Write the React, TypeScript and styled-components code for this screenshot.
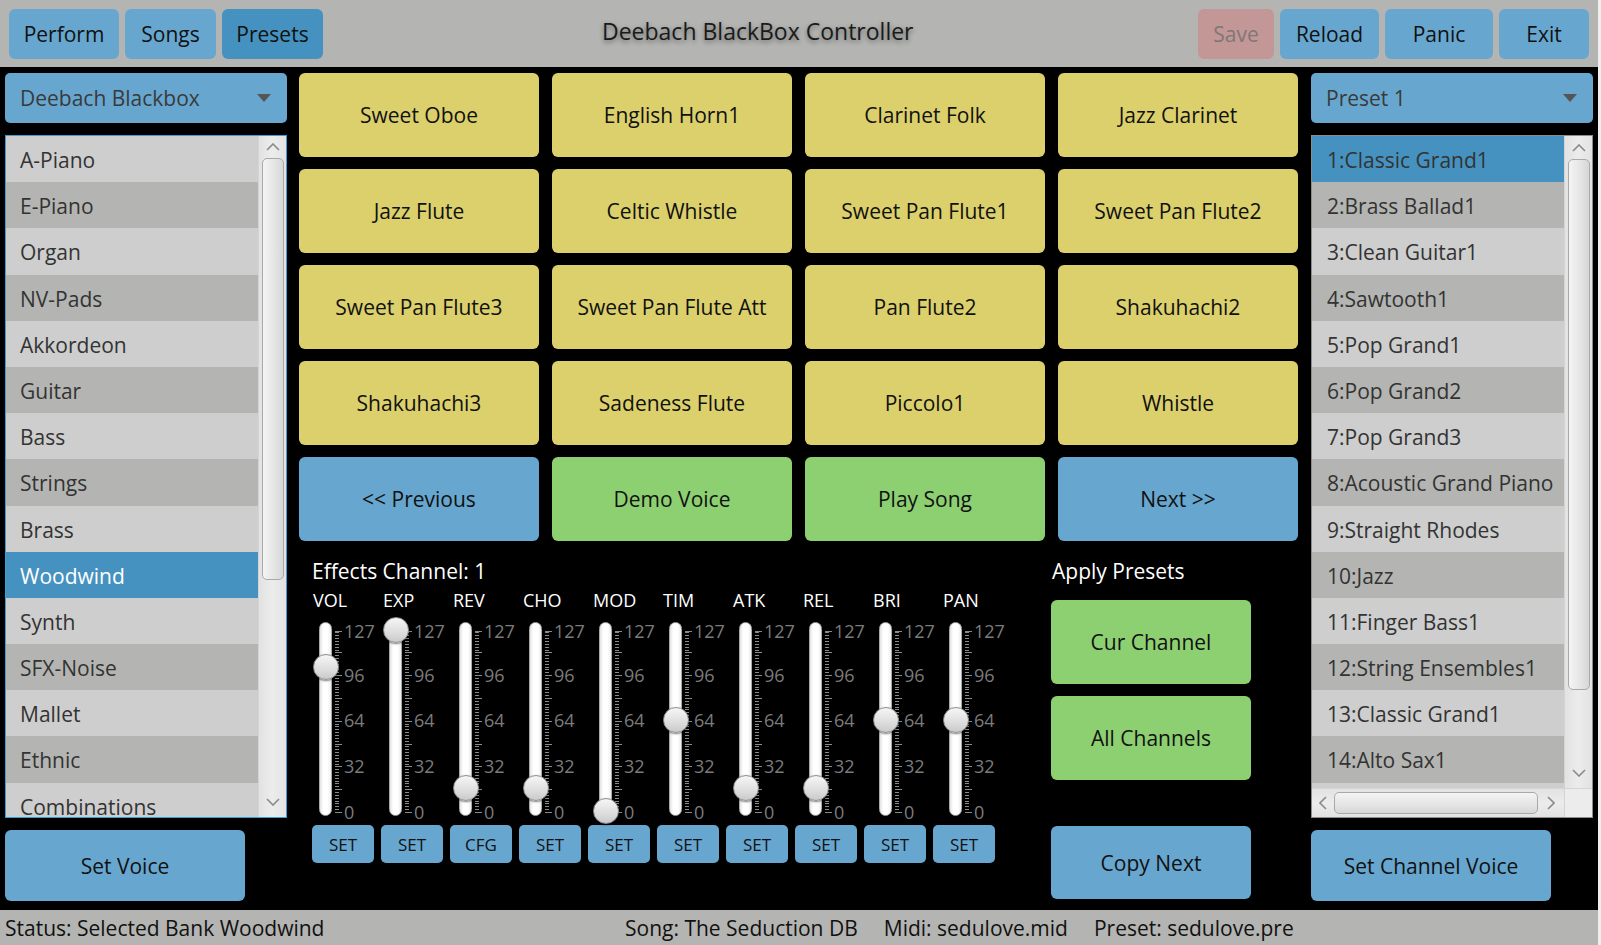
import React from 'react';
import styled, { createGlobalStyle } from 'styled-components';

const GlobalStyle = createGlobalStyle`
  html, body { margin: 0; padding: 0; background: #efefef; }
  body { font-family: "Open Sans", "Noto Sans", sans-serif; }
  * { box-sizing: border-box; }
`;

const Window = styled.div`
  width: 1598px;
  height: 945px;
  display: flex;
  flex-direction: column;
  background: #000;
  overflow: hidden;
`;

/* ---------- top bar ---------- */
const TopBar = styled.header`
  flex: 0 0 67px;
  background: #b4b5b2;
  display: flex;
  align-items: flex-start;
  padding: 9px 9px 0 9px;
  gap: 6px;
`;

const TopButton = styled.button<{ $w: number; $active?: boolean; $disabled?: boolean }>`
  width: ${(p) => p.$w}px;
  height: 50px;
  border: none;
  border-radius: 6px;
  background: ${(p) => (p.$disabled ? '#c49797' : p.$active ? '#4592c0' : '#67a7cf')};
  color: ${(p) => (p.$disabled ? '#7e7878' : '#111')};
  font-family: inherit;
  font-size: 21px;
  padding: 0;
  cursor: pointer;
`;

const Title = styled.h1`
  margin: 0 0 0 273px;
  font-size: 23px;
  font-weight: 400;
  line-height: 44px;
  color: #1a1a1a;
  text-shadow: 0 2px 5px rgba(0, 0, 0, 0.45);
  white-space: nowrap;
`;

const Spacer = styled.div`
  flex: 1;
`;

/* ---------- main ---------- */
const Main = styled.main`
  flex: 1 1 0;
  min-height: 0;
  overflow: hidden;
  display: flex;
  padding: 6px 5px 9px 5px;
`;

const SideColumn = styled.section`
  width: 282px;
  min-height: 0;
  display: flex;
  flex-direction: column;
  gap: 12px;
`;

const CenterColumn = styled.section`
  width: 999px;
  margin: 0 13px 0 12px;
  display: flex;
  flex-direction: column;
`;

const Combo = styled.div`
  height: 50px;
  flex: 0 0 50px;
  background: #67a7cf;
  border-radius: 5px;
  display: flex;
  align-items: center;
  justify-content: space-between;
  padding: 0 16px 0 15px;
  color: #3a3a3a;
  font-size: 21px;
`;

const ComboArrow = styled.span`
  width: 0;
  height: 0;
  border-left: 7px solid transparent;
  border-right: 7px solid transparent;
  border-top: 8px solid #555;
`;

const ListBox = styled.div<{ $focused?: boolean }>`
  flex: 1 1 0;
  min-height: 0;
  border: 1px solid ${(p) => (p.$focused ? '#3a9fd6' : '#8c8c8c')};
  background: #cecece;
  display: grid;
  grid-template-columns: minmax(0, 1fr) 28px;
  grid-template-rows: minmax(0, 1fr) auto;
  overflow: hidden;
`;

const Rows = styled.div`
  overflow: hidden;
  min-height: 0;
`;

const Row = styled.div<{ $dark: boolean; $selected?: boolean; $selText?: string; $pad: number }>`
  height: 46.2px;
  line-height: 44px;
  padding-top: 2px;
  padding-left: ${(p) => p.$pad}px;
  font-size: 21px;
  white-space: nowrap;
  background: ${(p) => (p.$selected ? '#4592c0' : p.$dark ? '#b4b5b2' : '#cecece')};
  color: ${(p) => (p.$selected ? p.$selText || '#fff' : '#333')};
`;

const VScroll = styled.div`
  min-height: 0;
  display: flex;
  flex-direction: column;
  align-items: stretch;
  background: linear-gradient(to right, #e2e2e2, #ececec 50%, #e2e2e2);
  border-left: 1px solid #d4d4d4;
`;

const ScrollArrow = styled.div<{ $size: number }>`
  flex: 0 0 ${(p) => p.$size}px;
  display: flex;
  align-items: center;
  justify-content: center;
`;

const VThumb = styled.div<{ $h: number }>`
  height: ${(p) => p.$h}px;
  flex: 0 0 ${(p) => p.$h}px;
  margin: 0 2px 0 3px;
  border: 1px solid #a9a9a9;
  border-radius: 5px;
  background: linear-gradient(to right, #f4f4f4, #e4e4e4 60%, #d6d6d6);
`;

const HScroll = styled.div`
  height: 29px;
  display: flex;
  align-items: center;
  background: linear-gradient(to bottom, #e2e2e2, #ececec 50%, #e2e2e2);
  border-top: 1px solid #d4d4d4;
`;

const HThumb = styled.div<{ $w: number }>`
  width: ${(p) => p.$w}px;
  height: 22px;
  border: 1px solid #a9a9a9;
  border-radius: 5px;
  background: linear-gradient(to bottom, #f4f4f4, #e4e4e4 60%, #d6d6d6);
`;

const Corner = styled.div`
  background: #ececec;
  border-top: 1px solid #d4d4d4;
  border-left: 1px solid #d4d4d4;
`;

const ActionButton = styled.button<{ $w: number; $h: number; $color?: string }>`
  width: ${(p) => p.$w}px;
  height: ${(p) => p.$h}px;
  flex: 0 0 ${(p) => p.$h}px;
  border: none;
  border-radius: 6px;
  background: ${(p) => p.$color || '#67a7cf'};
  color: #111;
  font-family: inherit;
  font-size: 21px;
  padding: 0;
  cursor: pointer;
`;

/* ---------- voice grid ---------- */
const VoiceGrid = styled.div`
  display: grid;
  grid-template-columns: repeat(4, 240px);
  grid-auto-rows: 84px;
  column-gap: 13px;
  row-gap: 12px;
`;

const VoiceButton = styled.button<{ $kind: 'voice' | 'nav' | 'play' }>`
  border: none;
  border-radius: 6px;
  background: ${(p) => (p.$kind === 'voice' ? '#dbd06c' : p.$kind === 'play' ? '#8dd072' : '#67a7cf')};
  color: #111;
  font-family: inherit;
  font-size: 21px;
  padding: 0;
  cursor: pointer;
`;

/* ---------- effects ---------- */
const Effects = styled.div`
  flex: 1;
  display: flex;
`;

const Mixer = styled.div`
  width: 752px;
  padding: 15px 0 0 7px;
  display: flex;
  flex-direction: column;
`;

const PanelHeading = styled.div<{ $indent: number }>`
  margin-left: ${(p) => p.$indent}px;
  height: 30px;
  line-height: 30px;
  font-size: 21px;
  color: #fff;
  white-space: nowrap;
`;

const SliderRow = styled.div`
  display: flex;
`;

const SliderCol = styled.div`
  width: 70px;
  flex: 0 0 70px;
  display: flex;
  flex-direction: column;
`;

const SliderLabel = styled.div`
  margin-left: 7px;
  height: 27px;
  line-height: 28px;
  font-size: 18px;
  color: #fff;
`;

const SliderBody = styled.div`
  height: 208px;
  margin-left: 13px;
  display: flex;
`;

const Track = styled.div`
  position: relative;
  flex: 0 0 13px;
  width: 13px;
  height: 194px;
  margin-top: 9px;
  border: 1px solid #a8a8a8;
  border-radius: 7px;
  background: linear-gradient(to right, #e4e4e4, #ffffff 30%, #ffffff 70%, #ececec);
`;

const Thumb = styled.div`
  position: absolute;
  left: -7.5px;
  width: 26px;
  height: 26px;
  border-radius: 50%;
  border: 1px solid #8e8e8e;
  background: linear-gradient(to bottom, #f6f6f6, #d9d9d9 70%, #cacaca);
  box-shadow: 0 1px 2px rgba(0, 0, 0, 0.5);
`;

const Scale = styled.svg`
  flex: 0 0 40px;
  margin-left: 3px;
  overflow: visible;
`;

const SetRow = styled.div`
  display: flex;
  gap: 7px;
  margin: 4px 0 0 6px;
`;

const SetButton = styled.button`
  width: 62px;
  height: 38px;
  border: none;
  border-radius: 5px;
  background: #67a7cf;
  color: #111;
  font-family: inherit;
  font-size: 17px;
  padding: 0;
  cursor: pointer;
`;

const ApplyPanel = styled.div`
  width: 200px;
  padding-top: 15px;
  display: flex;
  flex-direction: column;
`;

const ApplyStack = styled.div`
  margin-top: 14px;
  display: flex;
  flex-direction: column;
  gap: 12px;
`;

const CopyWrap = styled.div`
  margin-top: 46px;
`;

/* ---------- status ---------- */
const StatusBar = styled.footer`
  flex: 0 0 35px;
  background: #b4b5b2;
  display: flex;
  align-items: center;
  gap: 26px;
  font-size: 21px;
  color: #111;
  white-space: nowrap;
`;

const StatusMain = styled.span`
  flex: 0 0 599px;
  padding-left: 5px;
`;

/* ---------- pieces ---------- */
const Chevron: React.FC<{ dir: 'up' | 'down' | 'left' | 'right' }> = ({ dir }) => {
  const pts: Record<string, string> = {
    up: '1,7 7,1 13,7',
    down: '1,1 7,7 13,1',
    left: '7,1 1,7 7,13',
    right: '1,1 7,7 1,13',
  };
  const vertical = dir === 'up' || dir === 'down';
  return (
    <svg width={vertical ? 14 : 8} height={vertical ? 8 : 14} viewBox={vertical ? '0 0 14 8' : '0 0 8 14'}>
      <polyline points={pts[dir]} fill="none" stroke="#8a8a8a" strokeWidth="1.6" />
    </svg>
  );
};

const TOP0 = 18;
const SPAN = 181;
const yOf = (v: number) => TOP0 + ((127 - v) / 127) * SPAN;

const TickScale: React.FC = () => {
  const ticks: React.ReactNode[] = [];
  for (let v = 0; v <= 127; v += 2) {
    const major = v % 16 === 0;
    const y = Math.round(yOf(v)) + 0.5;
    ticks.push(<line key={v} x1={0} x2={major ? 7 : 4} y1={y} y2={y} stroke="#8a8a8a" strokeWidth={1} />);
  }
  const yt = Math.round(yOf(127)) + 0.5;
  ticks.push(<line key="top" x1={0} x2={7} y1={yt} y2={yt} stroke="#8a8a8a" strokeWidth={1} />);
  const labels = [127, 96, 64, 32, 0];
  return (
    <Scale width={40} height={208}>
      {ticks}
      {labels.map((v) => (
        <text
          key={v}
          x={9}
          y={yOf(v) + 6.5}
          fontSize={18}
          fill="#7c7c7c"
          fontFamily='"Open Sans", "Noto Sans", sans-serif'
        >
          {v}
        </text>
      ))}
    </Scale>
  );
};

const Slider: React.FC<{ label: string; value: number }> = ({ label, value }) => (
  <SliderCol>
    <SliderLabel>{label}</SliderLabel>
    <SliderBody>
      <Track>
        <Thumb style={{ top: 8 + ((127 - value) / 127) * SPAN - 14 }} />
      </Track>
      <TickScale />
    </SliderBody>
  </SliderCol>
);

const banks = [
  'A-Piano', 'E-Piano', 'Organ', 'NV-Pads', 'Akkordeon', 'Guitar', 'Bass', 'Strings',
  'Brass', 'Woodwind', 'Synth', 'SFX-Noise', 'Mallet', 'Ethnic', 'Combinations',
];

const presets = [
  '1:Classic Grand1', '2:Brass Ballad1', '3:Clean Guitar1', '4:Sawtooth1', '5:Pop Grand1',
  '6:Pop Grand2', '7:Pop Grand3', '8:Acoustic Grand Piano', '9:Straight Rhodes', '10:Jazz',
  '11:Finger Bass1', '12:String Ensembles1', '13:Classic Grand1', '14:Alto Sax1',
];

const voices = [
  'Sweet Oboe', 'English Horn1', 'Clarinet Folk', 'Jazz Clarinet',
  'Jazz Flute', 'Celtic Whistle', 'Sweet Pan Flute1', 'Sweet Pan Flute2',
  'Sweet Pan Flute3', 'Sweet Pan Flute Att', 'Pan Flute2', 'Shakuhachi2',
  'Shakuhachi3', 'Sadeness Flute', 'Piccolo1', 'Whistle',
];

const sliders: { label: string; value: number; btn: string }[] = [
  { label: 'VOL', value: 101, btn: 'SET' },
  { label: 'EXP', value: 127, btn: 'SET' },
  { label: 'REV', value: 16, btn: 'CFG' },
  { label: 'CHO', value: 16, btn: 'SET' },
  { label: 'MOD', value: 0, btn: 'SET' },
  { label: 'TIM', value: 64, btn: 'SET' },
  { label: 'ATK', value: 16, btn: 'SET' },
  { label: 'REL', value: 16, btn: 'SET' },
  { label: 'BRI', value: 64, btn: 'SET' },
  { label: 'PAN', value: 64, btn: 'SET' },
];

export default function App() {
  return (
    <>
      <GlobalStyle />
      <Window>
        <TopBar>
          <TopButton $w={110}>Perform</TopButton>
          <TopButton $w={91}>Songs</TopButton>
          <TopButton $w={101} $active>Presets</TopButton>
          <Title>Deebach BlackBox Controller</Title>
          <Spacer />
          <TopButton $w={76} $disabled>Save</TopButton>
          <TopButton $w={99}>Reload</TopButton>
          <TopButton $w={108}>Panic</TopButton>
          <TopButton $w={90}>Exit</TopButton>
        </TopBar>

        <Main>
          <SideColumn>
            <Combo>
              Deebach Blackbox
              <ComboArrow />
            </Combo>
            <ListBox $focused>
              <Rows>
                {banks.map((b, i) => (
                  <Row key={b} $dark={i % 2 === 1} $selected={b === 'Woodwind'} $pad={14}>
                    {b}
                  </Row>
                ))}
              </Rows>
              <VScroll>
                <ScrollArrow $size={22}><Chevron dir="up" /></ScrollArrow>
                <VThumb $h={422} />
                <Spacer />
                <ScrollArrow $size={30}><Chevron dir="down" /></ScrollArrow>
              </VScroll>
            </ListBox>
            <ActionButton $w={240} $h={71}>Set Voice</ActionButton>
          </SideColumn>

          <CenterColumn>
            <VoiceGrid>
              {voices.map((v) => (
                <VoiceButton key={v} $kind="voice">{v}</VoiceButton>
              ))}
              <VoiceButton $kind="nav">&lt;&lt; Previous</VoiceButton>
              <VoiceButton $kind="play">Demo Voice</VoiceButton>
              <VoiceButton $kind="play">Play Song</VoiceButton>
              <VoiceButton $kind="nav">Next &gt;&gt;</VoiceButton>
            </VoiceGrid>

            <Effects>
              <Mixer>
                <PanelHeading $indent={6}>Effects Channel: 1</PanelHeading>
                <SliderRow>
                  {sliders.map((s) => (
                    <Slider key={s.label} label={s.label} value={s.value} />
                  ))}
                </SliderRow>
                <SetRow>
                  {sliders.map((s) => (
                    <SetButton key={s.label}>{s.btn}</SetButton>
                  ))}
                </SetRow>
              </Mixer>
              <ApplyPanel>
                <PanelHeading $indent={1}>Apply Presets</PanelHeading>
                <ApplyStack>
                  <ActionButton $w={200} $h={84} $color="#8dd072">Cur Channel</ActionButton>
                  <ActionButton $w={200} $h={84} $color="#8dd072">All Channels</ActionButton>
                </ApplyStack>
                <CopyWrap>
                  <ActionButton $w={200} $h={73}>Copy Next</ActionButton>
                </CopyWrap>
              </ApplyPanel>
            </Effects>
          </CenterColumn>

          <SideColumn>
            <Combo>
              Preset 1
              <ComboArrow />
            </Combo>
            <ListBox>
              <Rows>
                {presets.map((p, i) => (
                  <Row key={p} $dark={i % 2 === 1} $selected={i === 0} $selText="#333" $pad={15}>
                    {p}
                  </Row>
                ))}
              </Rows>
              <VScroll>
                <ScrollArrow $size={23}><Chevron dir="up" /></ScrollArrow>
                <VThumb $h={531} />
                <Spacer />
                <ScrollArrow $size={30}><Chevron dir="down" /></ScrollArrow>
              </VScroll>
              <HScroll>
                <ScrollArrow $size={22}><Chevron dir="left" /></ScrollArrow>
                <HThumb $w={205} />
                <Spacer />
                <ScrollArrow $size={26}><Chevron dir="right" /></ScrollArrow>
              </HScroll>
              <Corner />
            </ListBox>
            <ActionButton $w={240} $h={71}>Set Channel Voice</ActionButton>
          </SideColumn>
        </Main>

        <StatusBar>
          <StatusMain>Status: Selected Bank Woodwind</StatusMain>
          <span>Song: The Seduction DB</span>
          <span>Midi: sedulove.mid</span>
          <span>Preset: sedulove.pre</span>
        </StatusBar>
      </Window>
    </>
  );
}
